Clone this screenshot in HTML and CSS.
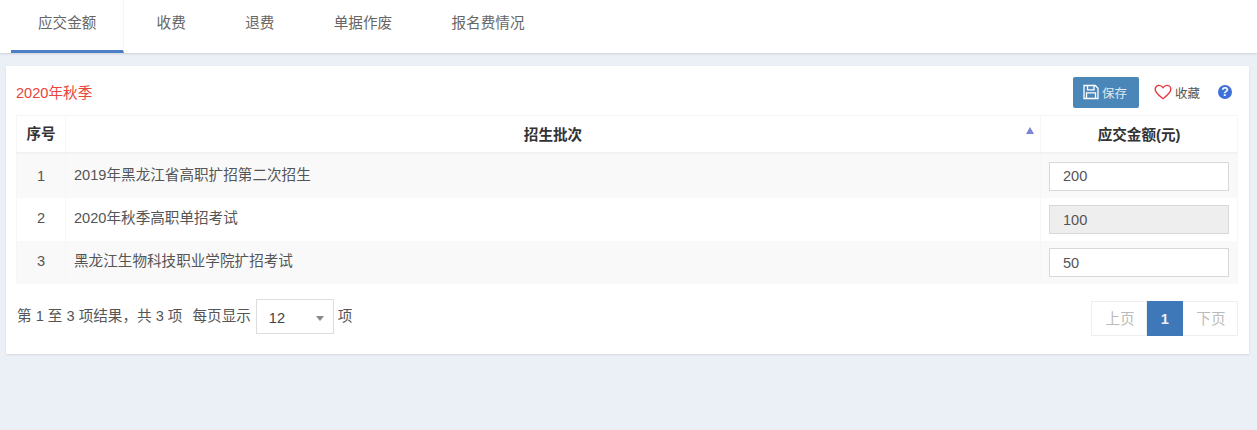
FILE: index.html
```html
<!DOCTYPE html>
<html lang="en">
<head>
  <meta charset="UTF-8">
  <title>应交金额</title>
  <link rel="stylesheet" href="styles.css">
</head>
<body>
  <div class="tabs">
    <a class="tab active">应交金额</a>
    <a class="tab">收费</a>
    <a class="tab">退费</a>
    <a class="tab">单据作废</a>
    <a class="tab">报名费情况</a>
  </div>

  <div class="card">
    <div class="toolbar">
      <span class="term">2020年秋季</span>
      <div class="actions">
        <button class="saveBtn">
          <svg width="16" height="16" viewBox="0 0 16 16" fill="none" stroke="#fff" stroke-width="1.3">
            <path d="M1 1.500h11.300l2.700 2.700v10.300h-14z"/>
            <path d="M4.500 1.500v4.300h6.500v-4.300"/>
            <path d="M3.500 14.500v-5.700h9v5.700"/>
          </svg>
          保存
        </button>
        <span class="fav">
          <svg width="18" height="16" viewBox="0 0 18 16" fill="none" stroke="#e5343d" stroke-width="1.4">
            <path d="M9 14.600C5.600 12 1.200 9 1.200 5.300 1.200 3 3 1.400 5 1.400c1.700 0 3 .9 4 2.300 1-1.400 2.300-2.300 4-2.300 2 0 3.800 1.600 3.800 3.900C16.800 9 12.400 12 9 14.600z"/>
          </svg>
          收藏
        </span>
        <span class="help">?</span>
      </div>
    </div>

    <table class="grid">
      <thead>
        <tr>
          <th class="colNo">序号</th>
          <th class="colName sorted">招生批次</th>
          <th class="colFee">应交金额(元)</th>
        </tr>
      </thead>
      <tbody>
        <tr class="odd rowFirst">
          <td class="colNo">1</td>
          <td class="nameCell">2019年黑龙江省高职扩招第二次招生</td>
          <td><input class="feeInput" type="text" value="200"></td>
        </tr>
        <tr>
          <td class="colNo">2</td>
          <td class="nameCell">2020年秋季高职单招考试</td>
          <td><input class="feeInput" type="text" value="100" disabled></td>
        </tr>
        <tr class="odd">
          <td class="colNo">3</td>
          <td class="nameCell">黑龙江生物科技职业学院扩招考试</td>
          <td><input class="feeInput" type="text" value="50"></td>
        </tr>
      </tbody>
    </table>

    <div class="footer">
      <div class="info">
        <span class="infoText">第 1 至 3 项结果，共 3 项</span>
        <span class="infoText lengthLabel">每页显示</span>
        <span class="lengthSelect">12<i class="caret"></i></span>
        <span class="infoText">项</span>
      </div>
      <div class="pager">
        <a class="page">上页</a>
        <a class="page current">1</a>
        <a class="page">下页</a>
      </div>
    </div>
  </div>
</body>
</html>
```

FILE: styles.css
```css
html, body {
  height: 100%;
}

body {
  margin: 0;
  background-color: #ebeff6;
  color: #555;
  font-family: "Liberation Sans", "Noto Sans CJK SC", sans-serif;
  font-size: 14.6px;
}

.tabs {
  display: flex;
  height: 53px;
  padding-left: 11px;
  box-sizing: border-box;
  background-color: #fff;
  box-shadow: 0 1px 2px rgba(0, 0, 0, 0.12);
}

.tab {
  padding: 13px 29.7px 0;
  color: #666;
  line-height: 20px;
}

.tab.active {
  margin-right: 2.500px;
  padding-left: 27px;
  padding-right: 27px;
  border-bottom: 3px solid #4d7fc6;
  border-right: 1px solid #f5f5f5;
}

.card {
  margin: 13px 8px 0 6px;
  padding: 0 11px 18px 10px;
  background-color: #fff;
  box-shadow: 0 1px 2px rgba(0, 0, 0, 0.1);
}

.toolbar {
  display: flex;
  justify-content: space-between;
  align-items: center;
  height: 49px;
  padding-top: 3px;
  box-sizing: border-box;
}

.term {
  margin-bottom: 2px;
  color: #e8453c;
}

.actions {
  display: flex;
  align-items: center;
  padding-right: 6px;
}

.saveBtn {
  display: flex;
  align-items: center;
  gap: 3px;
  width: 66px;
  height: 31px;
  padding: 0 0 0 10px;
  border: none;
  border-radius: 2px;
  background-color: #4a86b8;
  color: #dfeaf3;
  font-family: inherit;
  font-size: 12.5px;
}

.fav {
  display: flex;
  align-items: center;
  gap: 3px;
  margin-left: 15px;
  color: #555;
  font-size: 12.5px;
}

.help {
  width: 14px;
  height: 14px;
  margin-left: 18px;
  border-radius: 50%;
  background-color: #3f6fd8;
  color: #fff;
  font-size: 12px;
  font-weight: bold;
  line-height: 14px;
  text-align: center;
}

.grid {
  width: 100%;
  border-collapse: collapse;
  table-layout: fixed;
}

.grid th {
  height: 33px;
  padding: 0 0 2px;
  border: 1px solid #f6f6f6;
  border-bottom: 2px solid #f2f2f2;
  color: #333;
  font-weight: bold;
}

.grid td {
  height: 43px;
  padding: 0 8px;
  box-sizing: border-box;
  border-right: 1px solid #f6f6f6;
  border-left: 1px solid #f6f6f6;
}

.grid .colNo {
  width: 48px;
  padding: 0 0 3px;
  text-align: center;
}

.grid .nameCell {
  padding-bottom: 7px;
}

.colFee {
  width: 196px;
}

.grid .rowFirst td {
  height: 45px;
}

.grid .rowFirst .colNo {
  padding-bottom: 1px;
}

.grid .rowFirst .nameCell {
  padding-bottom: 5px;
}

.odd td {
  background-color: #f9f9f9;
}

.sorted {
  position: relative;
}

.sorted::after {
  content: "";
  position: absolute;
  top: 11px;
  right: 6px;
  border-left: 4px solid transparent;
  border-right: 4px solid transparent;
  border-bottom: 7px solid #7b84d6;
}

.feeInput {
  display: block;
  width: 100%;
  height: 29px;
  padding: 0 13px;
  box-sizing: border-box;
  border: 1px solid #d8d8d8;
  background-color: #fff;
  color: #555;
  font-family: inherit;
  font-size: 14.6px;
}

.feeInput:disabled {
  background-color: #eee;
}

.footer {
  display: flex;
  justify-content: space-between;
  align-items: flex-start;
  margin-top: 15px;
}

.info {
  display: flex;
  align-items: center;
  padding-left: 1px;
}

.infoText {
  margin-bottom: 4px;
}

.lengthLabel {
  margin-left: 10px;
}

.lengthSelect {
  display: flex;
  align-items: center;
  justify-content: space-between;
  width: 78px;
  height: 35px;
  margin: 0 4px 0 5px;
  padding: 3px 9px 0 12px;
  box-sizing: border-box;
  border: 1px solid #ddd;
  color: #444;
}

.caret {
  border-left: 4px solid transparent;
  border-right: 4px solid transparent;
  border-top: 5px solid #888;
}

.pager {
  display: flex;
  margin-top: 2px;
}

.page {
  height: 35px;
  padding: 0 11.5px 0 13px;
  box-sizing: border-box;
  border: 1px solid #eee;
  color: #bbb;
  line-height: 35px;
}

.page + .page {
  border-left: none;
}

.page.current {
  padding: 0 13.5px;
  border-color: #3f78b8;
  background-color: #3f78b8;
  color: #e8f0f8;
  font-weight: bold;
}
```
